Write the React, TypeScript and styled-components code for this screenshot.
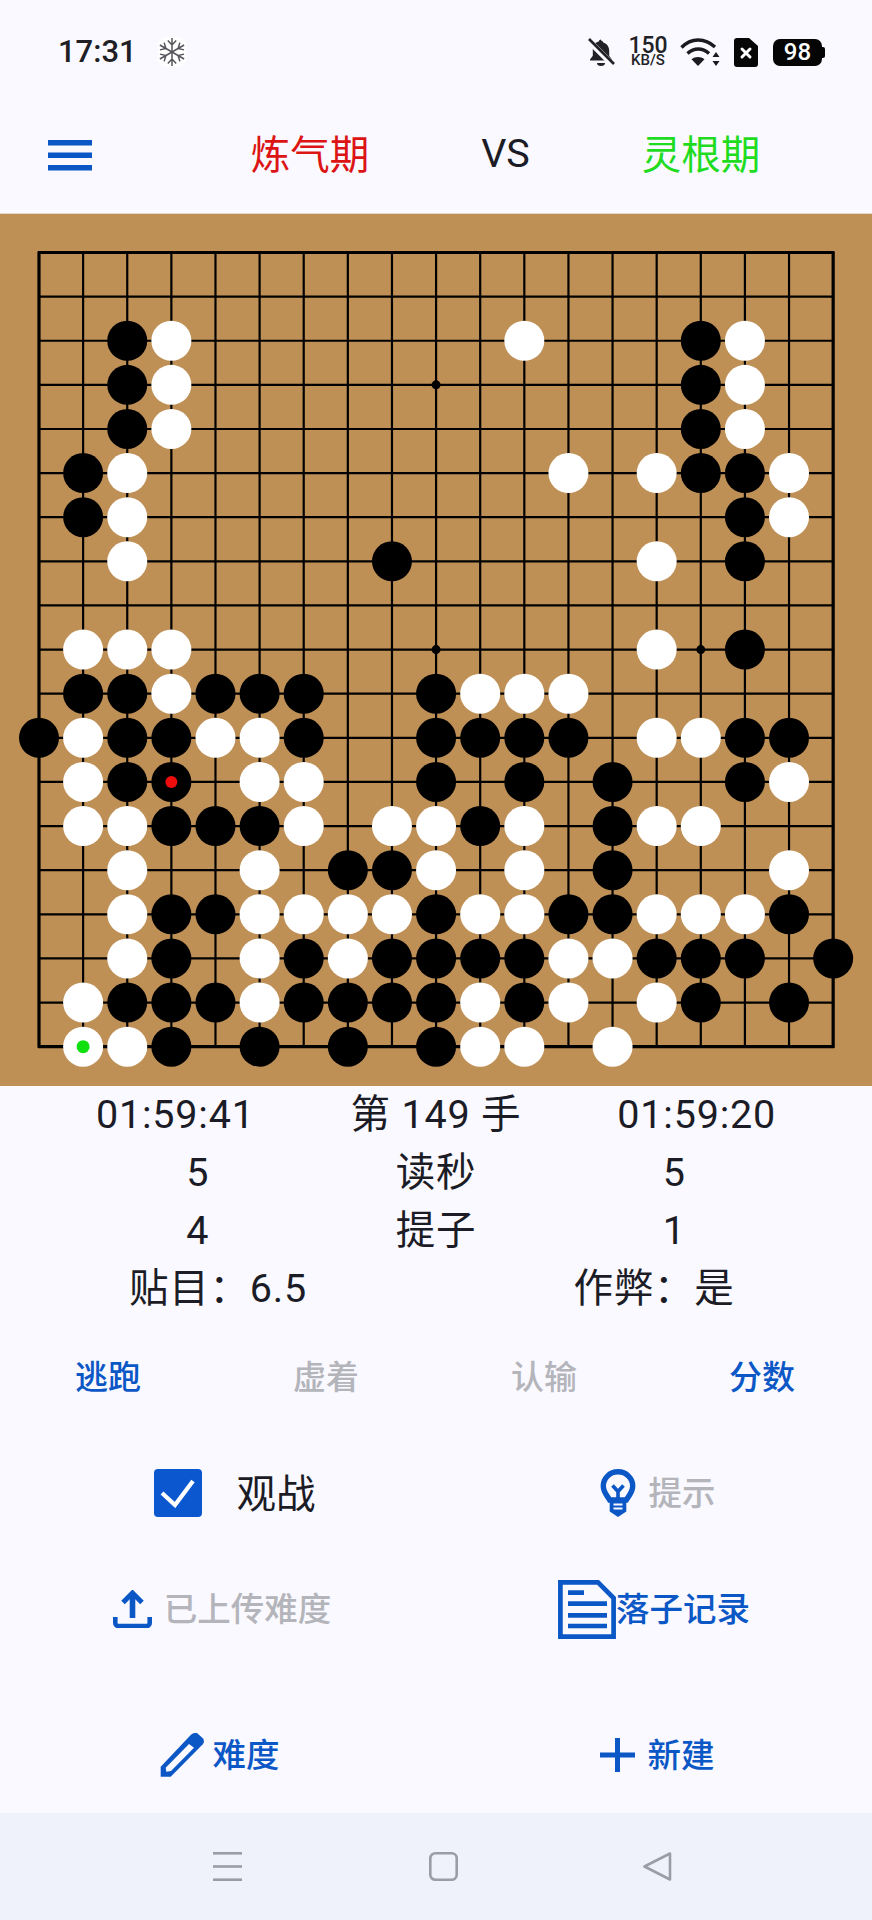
import React from "react";
import styled, { createGlobalStyle } from "styled-components";

const BLUE = "#0b57c6";
const INK = "#1c1c26";
const MUTED = "#b4b4bb";
const FONT = `Roboto, "Noto Sans CJK SC", sans-serif`;

const Global = createGlobalStyle`
  html, body { margin: 0; padding: 0; background: #f9f9ff; }
  #root { width: 872px; height: 1920px; }
`;

const Page = styled.div`
  width: 872px;
  height: 1920px;
  display: flex;
  flex-direction: column;
  background: #f9f9ff;
  color: ${INK};
  font-family: ${FONT};
  overflow: hidden;
`;

const StatusBar = styled.div`
  height: 97px;
  box-sizing: border-box;
  padding: 37px 50px 0 58px;
  display: flex;
  align-items: flex-start;
  justify-content: space-between;
`;
const StatusLeft = styled.div`
  display: flex;
  align-items: center;
  gap: 21px;
  height: 30px;
`;
const Clock = styled.span`
  font-size: 31px;
  font-weight: 500;
  line-height: 30px;
  color: #202024;
`;
const StatusRight = styled.div`
  display: flex;
  align-items: center;
  height: 30px;
`;
const Speed = styled.div`
  width: 40px;
  margin: 0 12px 0 13px;
  display: flex;
  flex-direction: column;
  align-items: center;
  color: #222226;
  font-weight: 500;
`;
const SpeedValue = styled.span`
  font-size: 23px;
  line-height: 17px;
`;
const SpeedUnit = styled.span`
  font-size: 15px;
  line-height: 13px;
`;
const BatteryBox = styled.div`
  margin-left: 15px;
  width: 49px;
  height: 27px;
  border-radius: 7px;
  background: #050505;
  color: #fff;
  font-size: 24px;
  font-weight: 500;
  display: flex;
  align-items: center;
  justify-content: center;
  position: relative;
  &::after {
    content: "";
    position: absolute;
    right: -3px;
    top: 8px;
    width: 3px;
    height: 11px;
    border-radius: 0 2px 2px 0;
    background: #050505;
  }
`;

const Header = styled.div`
  height: 116px;
  display: flex;
  align-items: center;
`;
const MenuSlot = styled.div`
  width: 139px;
  box-sizing: border-box;
  padding-left: 48px;
  display: flex;
`;
const Players = styled.div`
  flex: 1;
  display: flex;
  justify-content: space-evenly;
  align-items: center;
  font-size: 39.5px;
`;
const Player = styled.span<{ $color: string; $lift?: number }>`
  color: ${(p) => p.$color};
  margin-bottom: ${(p) => p.$lift ?? 0}px;
`;

const BoardWrap = styled.div`
  width: 872px;
  height: 873px;
  flex: none;
  background: #bf9056;
  border-top: 1px solid #e5d8c7;
  box-sizing: border-box;
`;

const InfoRow = styled.div<{ $even?: boolean }>`
  height: 58px;
  flex: none;
  display: ${(p) => (p.$even ? "grid" : "flex")};
  grid-template-columns: 1fr 1fr;
  justify-content: space-evenly;
  justify-items: center;
  align-items: center;
  font-size: 39.5px;
  line-height: 58px;
  letter-spacing: 0.8px;
`;

const Commands = styled.div`
  height: 118px;
  flex: none;
  box-sizing: border-box;
  padding-bottom: 5px;
  display: grid;
  grid-template-columns: repeat(4, 1fr);
  justify-items: center;
  align-items: center;
`;
const Command = styled.span<{ $off?: boolean }>`
  font-size: 33px;
  font-weight: 500;
  color: ${(p) => (p.$off ? MUTED : BLUE)};
  position: relative;
  left: -1px;
`;

const ActionRow = styled.div<{ $h: number; $pt?: number }>`
  height: ${(p) => p.$h}px;
  flex: none;
  box-sizing: border-box;
  padding-top: ${(p) => p.$pt ?? 0}px;
  display: grid;
  grid-template-columns: 1fr 1fr;
  align-items: center;
`;
const Action = styled.div<{ $gap: number; $off?: boolean; $shift?: number }>`
  display: flex;
  justify-content: center;
  align-items: center;
  gap: ${(p) => p.$gap}px;
  padding-left: ${(p) => p.$shift ?? 0}px;
  font-size: 33.5px;
  font-weight: 500;
  color: ${(p) => (p.$off ? MUTED : BLUE)};
`;
const ActionText = styled.span`
  margin-bottom: 6px;
`;
const WatchLabel = styled.span`
  font-size: 39.5px;
  font-weight: 400;
  color: ${INK};
  margin-bottom: 6px;
`;
const CheckBox = styled.div`
  width: 48px;
  height: 48px;
  border-radius: 4px;
  background: #0b57d0;
  display: flex;
  align-items: center;
  justify-content: center;
`;

const NavBar = styled.div`
  flex: 1;
  background: #f0f2fb;
  display: flex;
  align-items: center;
  box-sizing: border-box;
`;
const NavSlot = styled.div<{ $w: number }>`
  width: ${(p) => p.$w}px;
  display: flex;
  justify-content: flex-end;
`;

/* ---------- board ---------- */
type RowData = [number, number[], number[]];
const STONES: RowData[] = [
  [2, [2, 15], [3, 11, 16]],
  [3, [2, 15], [3, 16]],
  [4, [2, 15], [3, 16]],
  [5, [1, 15, 16], [2, 12, 14, 17]],
  [6, [1, 16], [2, 17]],
  [7, [8, 16], [2, 14]],
  [9, [16], [1, 2, 3, 14]],
  [10, [1, 2, 4, 5, 6, 9], [3, 10, 11, 12]],
  [11, [0, 2, 3, 6, 9, 10, 11, 12, 16, 17], [1, 4, 5, 14, 15]],
  [12, [2, 3, 9, 11, 13, 16], [1, 5, 6, 17]],
  [13, [3, 4, 5, 10, 13], [1, 2, 6, 8, 9, 11, 14, 15]],
  [14, [7, 8, 13], [2, 5, 9, 11, 17]],
  [15, [3, 4, 9, 12, 13, 17], [2, 5, 6, 7, 8, 10, 11, 14, 15, 16]],
  [16, [3, 6, 8, 9, 10, 11, 14, 15, 16, 18], [2, 5, 7, 12, 13]],
  [17, [2, 3, 4, 6, 7, 8, 9, 11, 15, 17], [1, 5, 10, 12, 14]],
  [18, [3, 5, 7, 9], [1, 2, 10, 11, 13]],
];
const X0 = 39;
const Y0 = 38.5;
const STEP = 44.12;
const px = (i: number) => X0 + i * STEP;
const py = (j: number) => Y0 + j * STEP;
const idx = Array.from({ length: 19 }, (_, i) => i);

function Board() {
  return (
    <svg width="872" height="872" viewBox="0 0 872 872" style={{ display: "block" }}>
      {idx.map((i) => (
        <g key={i} stroke="#000" strokeWidth={i === 0 || i === 18 ? 3.2 : 2.2}>
          <line x1={px(i)} y1={py(0) - 1} x2={px(i)} y2={py(18) + 1} />
          <line x1={px(0) - 1} y1={py(i)} x2={px(18) + 1} y2={py(i)} />
        </g>
      ))}
      {[
        [9, 3],
        [9, 9],
        [15, 9],
      ].map(([i, j]) => (
        <circle key={`${i}-${j}`} cx={px(i)} cy={py(j)} r="4.5" fill="#000" />
      ))}
      {STONES.map(([r, b, w]) => (
        <g key={r}>
          {b.map((c) => (
            <circle key={c} cx={px(c)} cy={py(r)} r="20" fill="#000" />
          ))}
          {w.map((c) => (
            <circle key={c} cx={px(c)} cy={py(r)} r="20" fill="#fff" />
          ))}
        </g>
      ))}
      <circle cx={px(3)} cy={py(12)} r="6" fill="#ee0d0d" />
      <circle cx={px(1)} cy={py(18)} r="6.5" fill="#10e010" />
    </svg>
  );
}

/* ---------- icons ---------- */
const Snowflake = () => (
  <svg width="28" height="30" viewBox="0 0 28 30" fill="none" stroke="#55555b" strokeWidth="1.500">
    <rect width="28" height="30" rx="9" fill="#fff" stroke="none" />
    {[0, 60, 120, 180, 240, 300].map((a) => (
      <path key={a} transform={`rotate(${a} 14 15)`} d="M14 15V1M9.800 3.500L14 8l4.200-4.500" />
    ))}
  </svg>
);
const BellOff = () => (
  <svg width="28" height="28" viewBox="0 0 28 28">
    <path
      d="M14 2.500c1.200 0 2 .8 2.200 2 3.800 1 6 4.200 6 8.300v5l2.800 3.700v1H3v-1l2.800-3.700v-6.500c0-4 2.200-6.800 6-7.800.2-1.200 1-2 2.200-2z"
      fill="#222226"
    />
    <path d="M10 25h8a4 3 0 0 1-8 0z" fill="#222226" />
    <path d="M1 2l25 25" stroke="#f9f9ff" strokeWidth="6" />
    <path d="M2 1l25 25" stroke="#222226" strokeWidth="2.600" />
  </svg>
);
const Wifi = () => (
  <svg width="40" height="29" viewBox="0 0 40 29" fill="none" stroke="#1b1b1f" strokeWidth="3.400">
    <path d="M1.500 9.500C11 -0.500 25 -0.500 35 9" />
    <path d="M7.500 15.500c6.500-6 15-6 21.500 0" />
    <path d="M18 28l-6.500-6.800c3.800-3 9.200-3 13 0z" fill="#1b1b1f" stroke="none" />
    <path d="M36 14l3.500 5h-7zM36 28l3.500-5h-7z" fill="#1b1b1f" stroke="none" />
  </svg>
);
const Sim = () => (
  <svg width="24" height="29" viewBox="0 0 24 29" style={{ marginLeft: 14 }}>
    <path d="M3 0h12l9 8v18a3 3 0 0 1-3 3H3a3 3 0 0 1-3-3V3a3 3 0 0 1 3-3z" fill="#070707" />
    <path d="M8 11l8 8M16 11l-8 8" stroke="#fff" strokeWidth="3" strokeLinecap="round" />
  </svg>
);
const Hamburger = () => (
  <svg width="44" height="31" viewBox="0 0 44 31" fill={BLUE}>
    <rect y="0" width="44" height="5.500" />
    <rect y="12.500" width="44" height="5.500" />
    <rect y="25" width="44" height="5.500" />
  </svg>
);
const Check = () => (
  <svg width="36" height="30" viewBox="0 0 36 30" fill="none" stroke="#fff" strokeWidth="4.200">
    <path d="M2 15l13 12L33 3" />
  </svg>
);
const Bulb = () => (
  <svg width="38" height="48" viewBox="0 0 38 48" fill="none" stroke={BLUE}>
    <path
      d="M19 2.800C10.500 2.800 4.300 9.500 4.300 17c0 6.500 4 9.500 6.400 14h16.600c2.400-4.500 6.400-7.500 6.400-14C33.700 9.500 27.500 2.800 19 2.800z"
      strokeWidth="5.400"
    />
    <path d="M13.500 16.500l5.500 6 5.500-6M19 22v9" strokeWidth="3.600" />
    <path d="M10.700 30h16.600v12.500l-8.300 5.500-8.300-5.500z" fill={BLUE} stroke="none" />
    <path d="M14.500 35.500h9M14.500 39.500h9" stroke="#f9f9ff" strokeWidth="1.800" />
  </svg>
);
const Upload = () => (
  <svg width="39" height="38" viewBox="0 0 39 38" fill="none" stroke={BLUE}>
    <path d="M19.500 4v24" strokeWidth="5.600" />
    <path d="M10 12.500l9.500-9.500 9.500 9.500" strokeWidth="5" />
    <path d="M2.300 27v6a3 3 0 0 0 3 3h28.400a3 3 0 0 0 3-3v-6" strokeWidth="4.600" />
  </svg>
);
const Doc = () => (
  <svg width="58" height="59" viewBox="0 0 58 59" fill="none" stroke={BLUE}>
    <path d="M2.400 2.400H40L55.600 18v38.600H2.400z" strokeWidth="4.700" />
    <path d="M10 12.700h16M10 23.700h39M10 35.300h39M10 46h39" strokeWidth="4.700" />
  </svg>
);
const Pencil = () => (
  <svg width="44" height="44" viewBox="0 0 44 44">
    <path d="M.7 43.700v-10L30.700 2c2-2 4.600-2.400 6.600-1.700l5.500 5c1.500 2 1.500 4.300 0 6L10.700 43.700z" fill={BLUE} />
    <path d="M5.700 34.700L29 11l5 3.700L11 38l-4.700.7z" fill="#f9f9ff" />
  </svg>
);
const Plus = () => (
  <svg width="35" height="34" viewBox="0 0 35 34" fill={BLUE}>
    <rect x="15" width="5" height="34" />
    <rect y="14.500" width="35" height="5" />
  </svg>
);
const NavMenu = () => (
  <svg width="29" height="29" viewBox="0 0 29 29" fill="#9c9ca6">
    <rect y="0" width="29" height="2.600" />
    <rect y="13.200" width="29" height="2.600" />
    <rect y="26.400" width="29" height="2.600" />
  </svg>
);
const NavHome = () => (
  <svg width="29" height="29" viewBox="0 0 29 29" fill="none" stroke="#9c9ca6" strokeWidth="2.600">
    <rect x="1.300" y="1.300" width="26.400" height="26.400" rx="5" />
  </svg>
);
const NavBack = () => (
  <svg width="29" height="29" viewBox="0 0 29 29" fill="none" stroke="#9c9ca6" strokeWidth="2.600" strokeLinejoin="round">
    <path d="M27 1.500v26L1.500 14.500z" />
  </svg>
);

export default function App() {
  return (
    <Page>
      <Global />
      <StatusBar>
        <StatusLeft>
          <Clock>17:31</Clock>
          <Snowflake />
        </StatusLeft>
        <StatusRight>
          <BellOff />
          <Speed>
            <SpeedValue>150</SpeedValue>
            <SpeedUnit>KB/S</SpeedUnit>
          </Speed>
          <Wifi />
          <Sim />
          <BatteryBox>98</BatteryBox>
        </StatusRight>
      </StatusBar>
      <Header>
        <MenuSlot>
          <Hamburger />
        </MenuSlot>
        <Players>
          <Player $color="#dc1414" $lift={7}>炼气期</Player>
          <Player $color={INK} $lift={3}>VS</Player>
          <Player $color="#1fdc1f" $lift={7}>灵根期</Player>
        </Players>
      </Header>
      <BoardWrap>
        <Board />
      </BoardWrap>
      <InfoRow>
        <span>01:59:41</span>
        <span>第 149 手</span>
        <span>01:59:20</span>
      </InfoRow>
      <InfoRow>
        <span>5</span>
        <span>读秒</span>
        <span>5</span>
      </InfoRow>
      <InfoRow>
        <span>4</span>
        <span>提子</span>
        <span>1</span>
      </InfoRow>
      <InfoRow $even>
        <span>贴目：6.5</span>
        <span>作弊：是</span>
      </InfoRow>
      <Commands>
        <Command>逃跑</Command>
        <Command $off>虚着</Command>
        <Command $off>认输</Command>
        <Command>分数</Command>
      </Commands>
      <ActionRow $h={114}>
        <Action $gap={35} $shift={33}>
          <CheckBox>
            <Check />
          </CheckBox>
          <WatchLabel>观战</WatchLabel>
        </Action>
        <Action $gap={12} $off $shift={6}>
          <Bulb />
          <ActionText>提示</ActionText>
        </Action>
      </ActionRow>
      <ActionRow $h={118}>
        <Action $gap={12} $off $shift={8}>
          <Upload />
          <ActionText>已上传难度</ActionText>
        </Action>
        <Action $gap={0}>
          <Doc />
          <ActionText>落子记录</ActionText>
        </Action>
      </ActionRow>
      <ActionRow $h={145} $pt={29}>
        <Action $gap={9} $shift={3}>
          <Pencil />
          <ActionText>难度</ActionText>
        </Action>
        <Action $gap={13} $shift={6}>
          <Plus />
          <ActionText>新建</ActionText>
        </Action>
      </ActionRow>
      <NavBar>
        <NavSlot $w={242}>
          <NavMenu />
        </NavSlot>
        <NavSlot $w={216}>
          <NavHome />
        </NavSlot>
        <NavSlot $w={214}>
          <NavBack />
        </NavSlot>
      </NavBar>
    </Page>
  );
}
